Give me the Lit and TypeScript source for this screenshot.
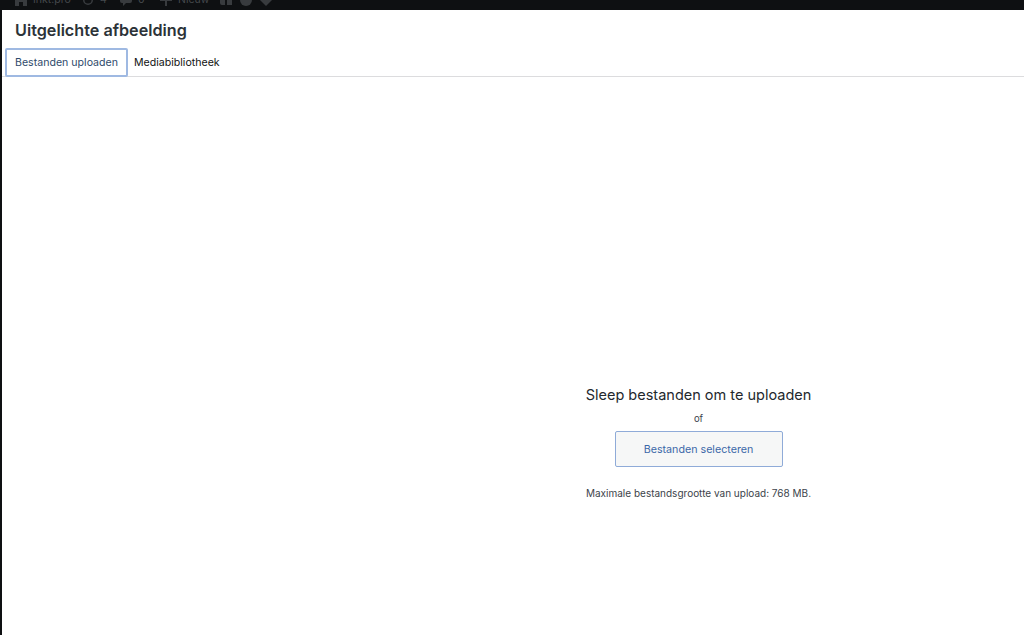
import { LitElement, html, css } from "lit";
import { customElement } from "lit/decorators.js";

@customElement("app-root")
export class AppRoot extends LitElement {
  static styles = css`
    :host {
      display: flex;
      flex-direction: column;
      width: 1024px;
      height: 635px;
      overflow: hidden;
      background: #0e1012;
      font-family: "Inter", "Liberation Sans", sans-serif;
      color: #2c3338;
    }
    .adminbar {
      height: 10px;
      flex: none;
      display: flex;
      align-items: flex-end;
      padding: 0 0 4px 15px;
      box-sizing: border-box;
      color: #44484c;
      font-size: 10.5px;
      line-height: 12px;
    }
    .adminbar span { display: inline-flex; gap: 6px; align-items: center; height: 12px; flex: none; }
    .adminbar svg { width: 12px; height: 12px; fill: #383b3e; flex: none; }
    .adminbar .home { width: 67px; }
    .adminbar .upd { width: 38px; }
    .adminbar .com { width: 40px; }
    .adminbar .new { width: 60px; }
    .adminbar .ic { width: 20px; }
    .modal {
      flex: 1;
      margin-left: 2px;
      background: #fff;
      display: flex;
      flex-direction: column;
      min-height: 0;
    }
    h1 {
      margin: 0;
      height: 38px;
      padding: 8px 0 0 13px;
      box-sizing: border-box;
      font-size: 16.2px;
      line-height: 24px;
      font-weight: 600;
      color: #2c3338;
    }
    .tabs {
      display: flex;
      height: 28px;
      border-bottom: 1px solid #dcdcde;
      flex: none;
      padding-left: 3px;
    }
    .tab {
      box-sizing: border-box;
      height: 29px;
      display: flex;
      align-items: center;
      font-size: 10.6px;
      color: #111;
      padding: 0 6px;
    }
    .tab.active {
      width: 123px;
      justify-content: center;
      padding: 0;
      border: 2px solid #9fb9e2;
      border-radius: 2px;
      color: #2f4a6b;
    }
    .drop {
      flex: 1;
      display: flex;
      flex-direction: column;
      align-items: center;
      padding: 308px 0 0 371px;
      box-sizing: border-box;
    }
    .title { font-size: 14.5px; line-height: 20px; color: #23282d; }
    .of { font-size: 9.5px; line-height: 14px; margin-top: 7px; color: #3c434a; }
    .btn {
      box-sizing: border-box;
      width: 168px;
      height: 36px;
      margin-top: 5px;
      display: flex;
      align-items: center;
      justify-content: center;
      background: #f6f7f7;
      border: 1px solid #8fabd8;
      border-radius: 2px;
      color: #3c68a8;
      font-size: 10.7px;
    }
    .max { font-size: 10px; line-height: 14px; margin-top: 19px; color: #3c434a; }
  `;

  render() {
    return html`
      <div class="adminbar">
        <span class="home"><svg viewBox="0 0 12 12"><path d="M6 0 L12 5 V12 H8 V8 H4 V12 H0 V5 Z" /></svg>Inkt.pro</span>
        <span class="upd"><svg viewBox="0 0 12 12"><path d="M6 1a5 5 0 1 0 5 5H9.5A3.5 3.5 0 1 1 6 2.5V5l4-3-4-3z" /></svg>4</span>
        <span class="com"><svg viewBox="0 0 12 12"><path d="M2 1h8a2 2 0 0 1 2 2v4a2 2 0 0 1-2 2H6l-3 3V9H2a2 2 0 0 1-2-2V3a2 2 0 0 1 2-2z" /></svg>0</span>
        <span class="new"><svg viewBox="0 0 12 12"><path d="M5 0h2v5h5v2H7v5H5V7H0V5h5z" /></svg>Nieuw</span>
        <span class="ic"><svg viewBox="0 0 12 12"><path d="M0 2h5v9H2a2 2 0 0 1-2-2zM7 2h3a2 2 0 0 1 2 2v7H7z" /></svg></span>
        <span class="ic"><svg viewBox="0 0 12 12"><circle cx="6" cy="6" r="6" /></svg></span>
        <span class="ic"><svg viewBox="0 0 12 12"><path d="M6 0l6 6-6 6-6-6z" /></svg></span>
      </div>
      <div class="modal">
        <h1>Uitgelichte afbeelding</h1>
        <div class="tabs">
          <div class="tab active">Bestanden uploaden</div>
          <div class="tab">Mediabibliotheek</div>
        </div>
        <div class="drop">
          <div class="title">Sleep bestanden om te uploaden</div>
          <div class="of">of</div>
          <div class="btn">Bestanden selecteren</div>
          <div class="max">Maximale bestandsgrootte van upload: 768 MB.</div>
        </div>
      </div>
    `;
  }
}
